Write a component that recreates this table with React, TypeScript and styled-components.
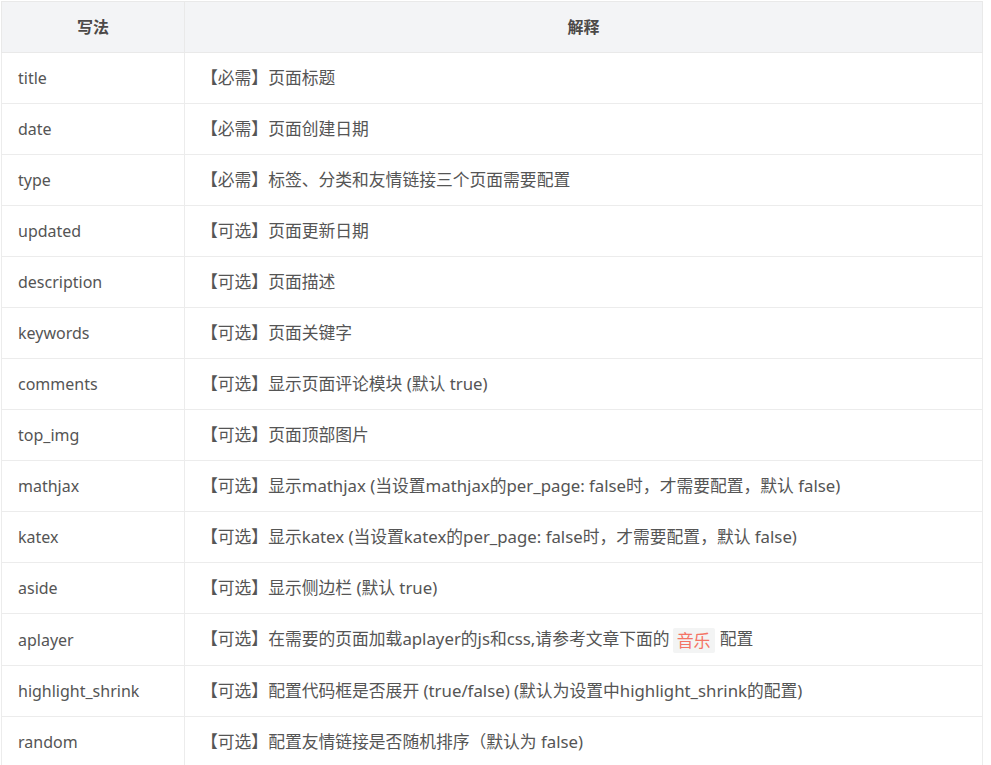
import React from 'react';
import styled, { createGlobalStyle } from 'styled-components';

const GlobalStyle = createGlobalStyle`
  html, body {
    margin: 0;
    padding: 0;
    background: #fff;
  }
  body {
    font-family: "Noto Sans", "Noto Sans CJK SC", sans-serif;
    color: #555;
  }
`;

const Page = styled.div`
  padding: 1px 0 0 1px;
`;

const Table = styled.table`
  width: 982px;
  border-collapse: collapse;
  table-layout: fixed;
  font-size: 16px;
`;

const HeadCell = styled.th<{ $width?: number }>`
  box-sizing: border-box;
  width: ${({ $width }) => ($width ? `${$width}px` : 'auto')};
  background: #f3f4f6;
  border: 1px solid #e9e9e9;
  padding: 12px 16px;
  line-height: 26px;
  font-weight: 700;
  font-size: 16px;
  color: #4c4948;
  text-align: center;
`;

const KeyCell = styled.td`
  border: 1px solid #ececec;
  padding: 12px 16px;
  line-height: 26px;
  font-size: 16px;
  color: #555;
  white-space: nowrap;
`;

const DescCell = styled(KeyCell)`
  font-size: 16.8px;
`;

const Code = styled.code`
  display: inline-block;
  font-family: "Noto Sans", "Noto Sans CJK SC", sans-serif;
  font-size: 17px;
  line-height: 25px;
  padding: 0 4px;
  margin: 0 5px 0 3px;
  background: #f3f4f4;
  color: #f47466;
  border-radius: 2px;
  vertical-align: middle;
`;

type Row = { key: string; desc: React.ReactNode };

const rows: Row[] = [
  { key: 'title', desc: '【必需】页面标题' },
  { key: 'date', desc: '【必需】页面创建日期' },
  { key: 'type', desc: '【必需】标签、分类和友情链接三个页面需要配置' },
  { key: 'updated', desc: '【可选】页面更新日期' },
  { key: 'description', desc: '【可选】页面描述' },
  { key: 'keywords', desc: '【可选】页面关键字' },
  { key: 'comments', desc: '【可选】显示页面评论模块 (默认 true)' },
  { key: 'top_img', desc: '【可选】页面顶部图片' },
  {
    key: 'mathjax',
    desc: '【可选】显示mathjax (当设置mathjax的per_page: false时，才需要配置，默认 false)',
  },
  {
    key: 'katex',
    desc: '【可选】显示katex (当设置katex的per_page: false时，才需要配置，默认 false)',
  },
  { key: 'aside', desc: '【可选】显示侧边栏 (默认 true)' },
  {
    key: 'aplayer',
    desc: (
      <>
        【可选】在需要的页面加载aplayer的js和css,请参考文章下面的<Code>音乐</Code>配置
      </>
    ),
  },
  {
    key: 'highlight_shrink',
    desc: '【可选】配置代码框是否展开 (true/false) (默认为设置中highlight_shrink的配置)',
  },
  { key: 'random', desc: '【可选】配置友情链接是否随机排序（默认为 false)' },
];

export default function App() {
  return (
    <>
      <GlobalStyle />
      <Page>
        <Table>
          <thead>
            <tr>
              <HeadCell $width={183}>写法</HeadCell>
              <HeadCell>解释</HeadCell>
            </tr>
          </thead>
          <tbody>
            {rows.map((r) => (
              <tr key={r.key}>
                <KeyCell>{r.key}</KeyCell>
                <DescCell>{r.desc}</DescCell>
              </tr>
            ))}
          </tbody>
        </Table>
      </Page>
    </>
  );
}
